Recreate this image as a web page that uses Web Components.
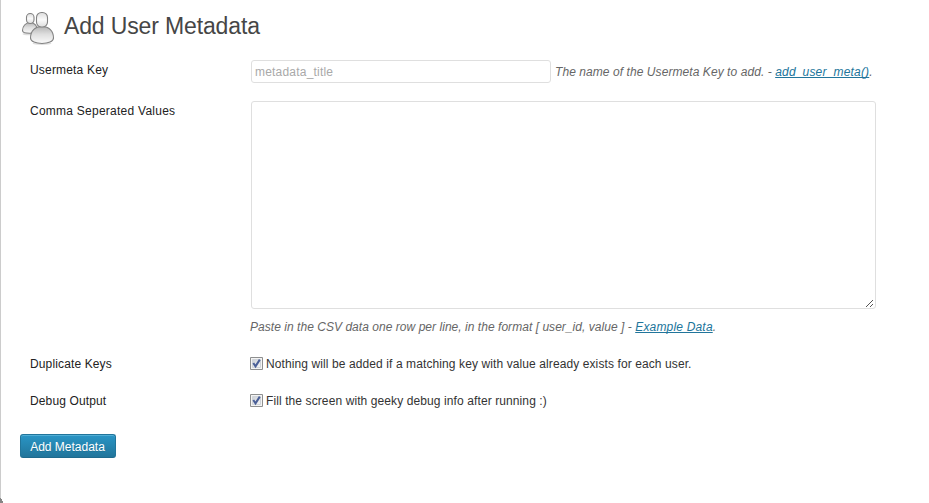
<!DOCTYPE html>
<html lang="en"><head><meta charset="utf-8"><title>Add User Metadata</title>
<style>
html,body{margin:0;background:#fff}
body{width:929px;height:503px;overflow:hidden;font:12px/18px "Liberation Sans",Arial,sans-serif;color:#333}
</style></head><body>
<meta-page></meta-page>
<script>
function define(name, html){
  const t=document.createElement('template');t.innerHTML=html;
  customElements.define(name,class extends HTMLElement{
    constructor(){super();this.attachShadow({mode:'open'}).append(t.content.cloneNode(true));}
  });
}
define('users-icon',`<style>:host{display:block;width:36px;height:36px}svg{display:block}</style>
<svg width="36" height="36" viewBox="0 0 36 36"><defs>
<linearGradient id="h" x2="0" y2="1"><stop stop-color="#ddd"/><stop offset=".5" stop-color="#fafafa"/><stop offset="1" stop-color="#dedede"/></linearGradient>
<linearGradient id="b" x2="0" y2="1"><stop stop-color="#b4b4b4"/><stop offset=".45" stop-color="#dedede"/><stop offset="1" stop-color="#fafafa"/></linearGradient></defs>
<ellipse cx="21" cy="33.600" rx="9.500" ry="1.400" fill="#ddd"/><ellipse cx="7.500" cy="24" rx="6" ry="1.300" fill="#ddd"/>
<g stroke="#828282" stroke-width="1.100"><path d="M1.500 20.500C1.500 16.500 4.500 12.500 9 12.500S16.500 16 16.500 20.500C15.500 24.200 1.500 24.200 1.500 20.500Z" fill="url(#b)"/>
<rect x="5.500" y="3.500" width="7.500" height="10" rx="3.700" fill="url(#h)"/>
<path d="M9.500 28C9.500 21 14 16.500 21 16.500S32.500 21 32.500 28C32.500 31.500 27 33.500 21 33.500S9.500 31.500 9.500 28Z" fill="url(#b)"/>
<rect x="15.500" y="2.500" width="11" height="14.500" rx="5" fill="url(#h)"/></g></svg>`);
define('page-heading',`<style>:host{display:flex;align-items:flex-start;gap:6px;height:44px;padding-left:1px}
h1{font:400 23px/29px "Liberation Sans",Arial,sans-serif;color:#464646;margin:2px 0 0 1px;letter-spacing:-.14px}</style>
<users-icon></users-icon><h1><slot></slot></h1>`);
define('form-row',`<style>:host{display:grid;grid-template-columns:220px 1fr;align-items:start;color:#222}
.l{letter-spacing:var(--label-spacing,.13px);white-space:nowrap}.c{color:#333;min-width:0}</style><div class="l"><slot name="label"></slot></div><div class="c"><slot></slot></div>`);
define('help-text',`<style>:host{display:block;font-style:italic;color:#666;white-space:nowrap;letter-spacing:var(--spacing,0)}
::slotted(a){color:#21759b;letter-spacing:.18px;text-decoration:underline;text-underline-offset:1px;text-decoration-skip-ink:none}</style><slot></slot>`);
define('key-input',`<style>:host{display:block;width:300px}input{display:block;box-sizing:border-box;width:300px;height:23px;margin:0;padding:1px 3px 0;border:1px solid #dfdfdf;border-radius:3px;font:12px/15px "Liberation Sans",Arial,sans-serif;letter-spacing:.2px;outline:0}input::placeholder{color:#a9a9a9;opacity:1}</style><input placeholder="metadata_title">`);
define('csv-area',`<style>:host{display:flex;align-items:flex-end;justify-content:flex-end;box-sizing:border-box;width:625px;height:208px;border:1px solid #dfdfdf;border-radius:3px;padding:0 1px 1px 0}svg{display:block}</style>
<svg width="8" height="8" shape-rendering="crispEdges" fill="#555"><path d="M0 7h1v1H0zM1 6h1v1H1zM2 5h1v1H2zM3 4h1v1H3zM4 3h1v1H4zM5 2h1v1H5zM6 1h1v1H6zM4 7h1v1H4zM5 6h1v1H5zM6 5h1v1H6z"/></svg>`);
define('check-option',`<style>:host{display:flex;align-items:flex-start;gap:3px;height:18px;white-space:nowrap;letter-spacing:.1px}svg{flex:none;margin-top:2px}</style>
<svg width="13" height="13"><defs><linearGradient id="g" x2="1" y2="1"><stop stop-color="#cbcfd5"/><stop offset="1" stop-color="#f6f6f6"/></linearGradient></defs><path d="M.5.5h12v12H.5z" fill="#f4f4f4" stroke="#8e8f8f"/><path d="M2.500 2.500h8v8h-8z" fill="url(#g)" stroke="#d0d4d9"/><path d="M3.300 6L5.500 9.300L9.800 2.600" fill="none" stroke="#4a5f97" stroke-width="2"/></svg><span><slot></slot></span>`);
define('primary-button',`<style>:host{display:block;width:96px}button{box-sizing:border-box;width:96px;height:24px;margin:0;padding:1px 1px 0 0;border:1px solid #21759b;border-bottom-color:#1e6a8d;border-radius:3px;background:linear-gradient(#2a95c5,#21759b);box-shadow:inset 0 1px 0 rgba(120,200,230,.5);font:12px/20px "Liberation Sans",Arial,sans-serif;color:#fff;text-shadow:0 1px 0 rgba(0,0,0,.1);white-space:nowrap}</style><button><slot></slot></button>`);
define('meta-page',`<style>:host{display:block;box-sizing:border-box;width:929px;height:503px;padding:10px 0 0 19px;position:relative;border-left:1px solid #ccc}
.corner{position:absolute;left:-1px;bottom:0}.rows{padding-left:10px}.inline{display:flex;gap:4px;margin-top:-1px}.inline help-text{padding-top:3px;--spacing:.07px}
key-input,csv-area{margin-left:1px}csv-area{margin-top:-1px}csv-area+help-text{margin-top:9px;--spacing:.04px}
.key{height:41px;padding-top:7px;--label-spacing:.18px}.csv{height:253px;--label-spacing:.25px}.duplicate{height:37px}.debug{height:42px}</style>
<page-heading>Add User Metadata</page-heading>
<div class="rows">
<form-row class="key"><span slot="label">Usermeta Key</span><div class="inline"><key-input></key-input><help-text>The name of the Usermeta Key to add. - <a href="#">add_user_meta()</a>.</help-text></div></form-row>
<form-row class="csv"><span slot="label">Comma Seperated Values</span><csv-area></csv-area><help-text>Paste in the CSV data one row per line, in the format [ user_id, value ] - <a href="#">Example Data</a>.</help-text></form-row>
<form-row class="duplicate"><span slot="label">Duplicate Keys</span><check-option>Nothing will be added if a matching key with value already exists for each user.</check-option></form-row>
<form-row class="debug"><span slot="label">Debug Output</span><check-option>Fill the screen with geeky debug info after running :)</check-option></form-row>
</div><primary-button>Add Metadata</primary-button>
<svg class="corner" width="3" height="5" shape-rendering="crispEdges"><path d="M0 0h1v1h1v2h1v2H0z" fill="#858585"/></svg>`);
</script></body></html>
